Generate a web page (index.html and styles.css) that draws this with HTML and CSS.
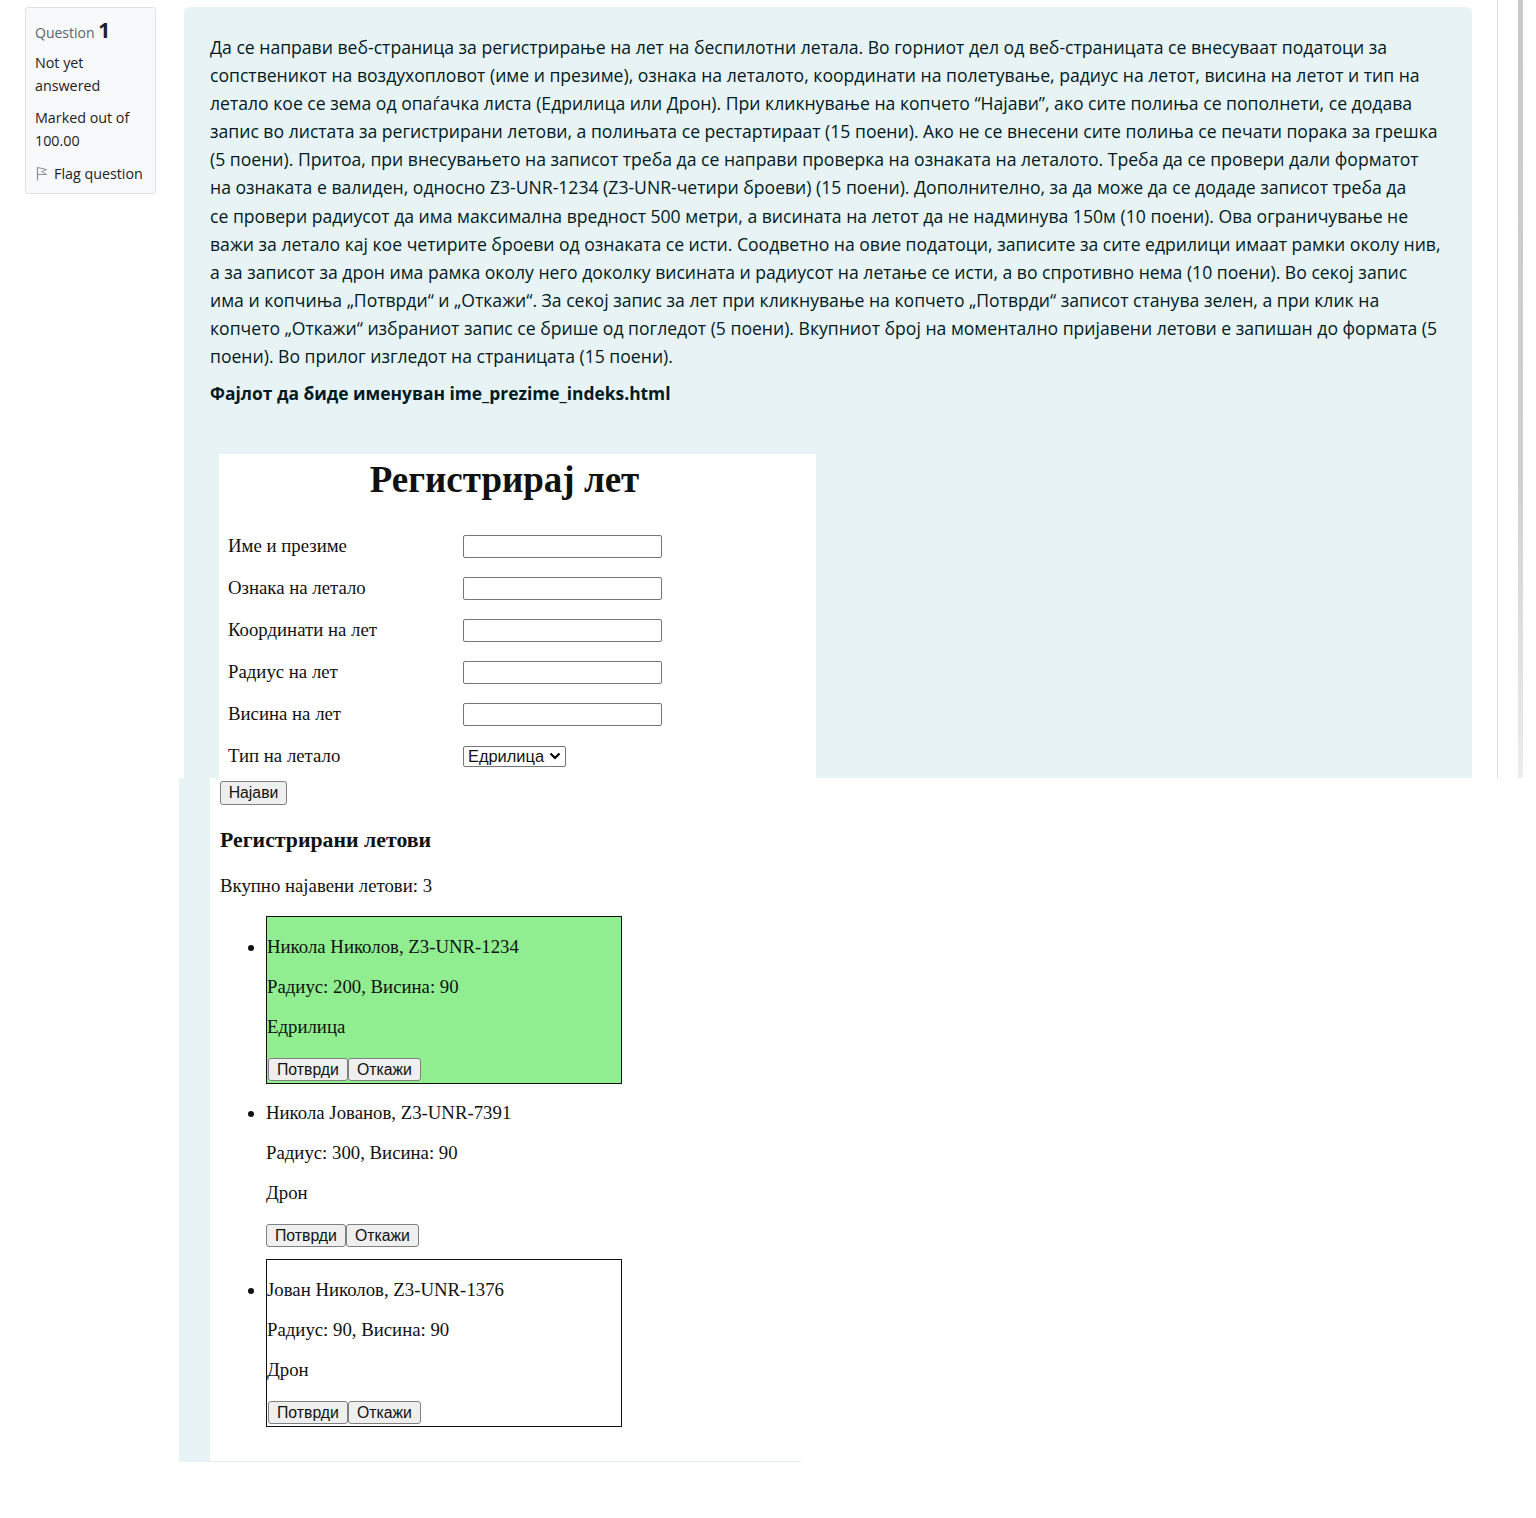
FILE: index.html
```html
<!DOCTYPE html>
<html lang="mk">
<head>
<meta charset="utf-8">
<title>Question 1</title>
<link rel="stylesheet" href="styles.css">
</head>
<body>
<div class="top">
  <aside class="info">
    <div class="qno">Question <span class="num">1</span></div>
    <div class="state">Not yet answered</div>
    <div class="grade">Marked out of 100.00</div>
    <div class="flag">
      <svg class="flag-icon" width="12" height="15" viewBox="0 0 12 15"><path d="M1.5 1 V14.5" stroke="#8a9096" stroke-width="1.2" fill="none"/><path d="M1.5 1.5 L10.5 3.5 L5.5 5.5 L10.5 8.5 L1.5 8.5" stroke="#8a9096" stroke-width="1" fill="none" stroke-linejoin="round"/></svg>
      <span>Flag question</span>
    </div>
  </aside>
  <div class="content">
    <p class="task">Да се направи веб-страница за регистрирање на лет на беспилотни летала. Во горниот дел од веб-страницата се внесуваат податоци за<br>сопственикот на воздухопловот (име и презиме), ознака на леталото, координати на полетување, радиус на летот, висина на летот и тип на<br>летало кое се зема од опаѓачка листа (Едрилица или Дрон). При кликнување на копчето “Најави”, ако сите полиња се пополнети, се додава<br>запис во листата за регистрирани летови, а полињата се рестартираат (15 поени). Ако не се внесени сите полиња се печати порака за грешка<br>(5 поени). Притоа, при внесувањето на записот треба да се направи проверка на ознаката на леталото. Треба да се провери дали форматот<br>на ознаката е валиден, односно Z3-UNR-1234 (Z3-UNR-четири броеви) (15 поени). Дополнително, за да може да се додаде записот треба да<br>се провери радиусот да има максимална вредност 500 метри, а висината на летот да не надминува 150м (10 поени). Ова ограничување не<br>важи за летало кај кое четирите броеви од ознаката се исти. Соодветно на овие податоци, записите за сите едрилици имаат рамки околу нив,<br>а за записот за дрон има рамка околу него доколку висината и радиусот на летање се исти, а во спротивно нема (10 поени). Во секој запис<br>има и копчиња „Потврди“ и „Откажи“. За секој запис за лет при кликнување на копчето „Потврди“ записот станува зелен, а при клик на<br>копчето „Откажи“ избраниот запис се брише од погледот (5 поени). Вкупниот број на моментално пријавени летови е запишан до формата (5<br>поени). Во прилог изгледот на страницата (15 поени).</p>
    <p class="file">Фајлот да биде именуван ime_prezime_indeks.html</p>
    <div class="shot">
      <h1 class="shot-title">Регистрирај лет</h1>
      <div class="form">
        <div class="row"><span class="lbl">Име и презиме</span><span class="inp"></span></div>
        <div class="row"><span class="lbl">Ознака на летало</span><span class="inp"></span></div>
        <div class="row"><span class="lbl">Координати на лет</span><span class="inp"></span></div>
        <div class="row"><span class="lbl">Радиус на лет</span><span class="inp"></span></div>
        <div class="row"><span class="lbl">Висина на лет</span><span class="inp"></span></div>
        <div class="row"><span class="lbl">Тип на летало</span><span class="sel">Едрилица <svg width="12" height="8" viewBox="0 0 12 8"><path d="M1.5 1.5 L6 6 L10.5 1.5" stroke="#000" stroke-width="2.2" fill="none"/></svg></span></div>
      </div>
    </div>
  </div>
  <div class="rule"></div>
  <div class="scroll"></div>
</div>
<div class="bottom">
  <div class="strip"></div>
  <div class="shot2">
    <span class="btn announce">Најави</span>
    <h3 class="reg-title">Регистрирани летови</h3>
    <p class="total">Вкупно најавени летови: 3</p>
    <ul class="flights">
      <li class="flight boxed confirmed">
        <p>Никола Николов, Z3-UNR-1234</p>
        <p>Радиус: 200, Висина: 90</p>
        <p>Едрилица</p>
        <div class="btns"><span class="btn">Потврди</span><span class="btn">Откажи</span></div>
      </li>
      <li class="flight">
        <p>Никола Јованов, Z3-UNR-7391</p>
        <p>Радиус: 300, Висина: 90</p>
        <p>Дрон</p>
        <div class="btns"><span class="btn">Потврди</span><span class="btn">Откажи</span></div>
      </li>
      <li class="flight boxed">
        <p>Јован Николов, Z3-UNR-1376</p>
        <p>Радиус: 90, Висина: 90</p>
        <p>Дрон</p>
        <div class="btns"><span class="btn">Потврди</span><span class="btn">Откажи</span></div>
      </li>
    </ul>
  </div>
</div>
</body>
</html>
```
FILE: styles.css
```css
* { box-sizing: border-box; }
html, body { margin: 0; padding: 0; background: #fff; }
body { font-family: "Open Sans", "Noto Sans", sans-serif; color: #1d2125; }

.top {
  display: flex;
  align-items: flex-start;
  height: 778px;
  overflow: hidden;
}

.info {
  margin: 7px 0 0 25px;
  width: 131px;
  height: 187px;
  flex: none;
  background: #f8f9fa;
  border: 1px solid #dee2e6;
  border-radius: 3px;
  padding: 10px 9px 0 9px;
  font-size: 14.3px;
  line-height: 23px;
}
.qno { color: #5b636b; font-size: 14px; line-height: 24px; }
.qno .num { color: #1d2125; font-weight: 700; font-size: 21px; }
.state { margin-top: 6px; }
.grade { margin-top: 9px; }
.flag { margin-top: 10px; display: flex; align-items: center; gap: 6px; }
.flag-icon { flex: none; margin-left: 1px; }

.content {
  margin: 7px 0 0 28px;
  width: 1288px;
  flex: none;
  min-height: 900px;
  background: #e7f3f5;
  border-radius: 6px;
  padding: 26px 26px 0 26px;
  color: #001a1e;
}
.task {
  margin: 0 0 9px 0;
  font-size: 17.6px;
  line-height: 28.1px;
  white-space: nowrap;
}
.file {
  margin: 0;
  font-weight: 700;
  font-size: 17.4px;
  line-height: 28.1px;
}

.shot {
  margin: 47px 0 0 9px;
  width: 597px;
  height: 400px;
  background: #fff;
  font-family: "Liberation Serif", "Times New Roman", serif;
  color: #111;
}
.shot-title {
  margin: 0;
  padding: 4px 26px 0 0;
  text-align: center;
  font-size: 37px;
  line-height: 44px;
  font-weight: 700;
}
.form { padding: 23px 0 0 9px; display: flex; flex-direction: column; }
.row { display: flex; align-items: center; height: 42px; font-size: 18.8px; }
.lbl { width: 235px; flex: none; }
.inp {
  width: 199px; height: 23px;
  border: 1px solid #767676; border-radius: 2px; background: #fff;
}
.sel {
  display: inline-flex; align-items: center; gap: 5px;
  height: 21px; padding: 0 4px 0 4px;
  border: 1px solid #767676; border-radius: 2px;
  font-family: "Liberation Sans", Arial, sans-serif; font-size: 16.4px;
}

.rule { margin-left: 25px; width: 1px; align-self: stretch; background: #dcdcdc; flex: none; }
.scroll { margin-left: 20px; width: 5px; align-self: stretch; background: linear-gradient(#c9c9c9 0, #d0d0d0 60%, #ececec 100%); flex: none; }

.bottom { display: flex; margin-left: 179px; height: 684px; }
.strip { width: 31px; flex: none; background: #e7f3f5; }
.shot2 {
  width: 591px; flex: none;
  border-bottom: 1px solid #e4eef0;
  padding: 3px 0 0 10px;
  font-family: "Liberation Serif", "Times New Roman", serif;
  color: #111;
  font-size: 18.8px;
}
.btn {
  display: inline-flex; align-items: center; justify-content: center;
  height: 24px; padding: 0 8px;
  background: #efefef;
  border: 1px solid #808080; border-radius: 3px;
  font-family: "Liberation Sans", Arial, sans-serif; font-size: 15.8px; color: #111;
}
.announce { width: 67px; }
.reg-title { margin: 22px 0 0 0; font-size: 21.8px; line-height: 26px; font-weight: 700; }
.total { margin: 22px 0 0 0; line-height: 22px; }
.flights { margin: 19px 0 0 0; padding: 0 0 0 46px; }
.flight { width: 356px; margin: 0 0 12px 0; line-height: 22px; }
.flight p { margin: 18px 0; }
.flight.boxed { border: 1px solid #111; padding-bottom: 2px; }
.flight.boxed p:first-child { margin-top: 19px; }
.flight.boxed .btns { padding-left: 1px; }
.flight.confirmed { background: #90ee90; }
.btns { display: flex; height: 23px; margin-top: 20px; }
.btns .btn { height: 23px; }
```
